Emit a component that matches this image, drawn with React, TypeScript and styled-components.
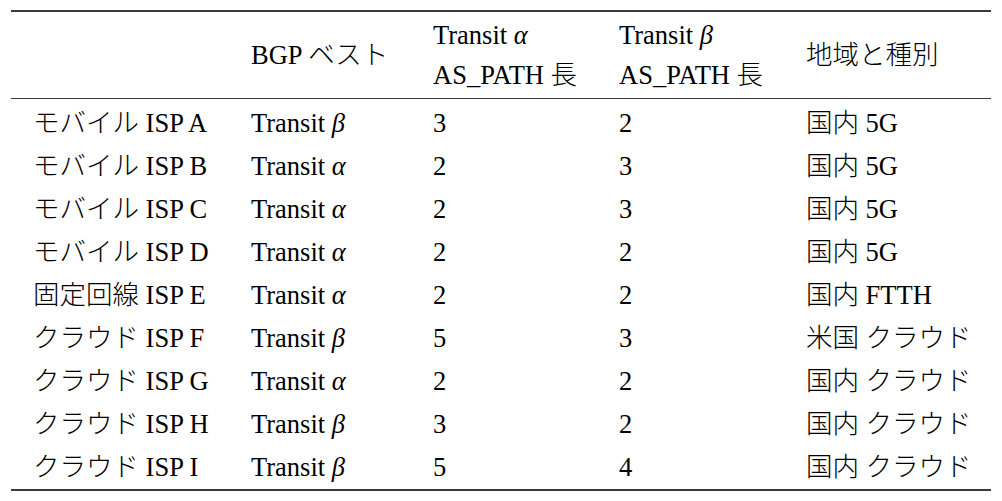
import React from "react";
import styled, { createGlobalStyle } from "styled-components";

interface Row {
  name: string;
  best: "α" | "β";
  alpha: number;
  beta: number;
  region: string;
}

const rows: Row[] = [
  { name: "モバイル ISP A", best: "β", alpha: 3, beta: 2, region: "国内 5G" },
  { name: "モバイル ISP B", best: "α", alpha: 2, beta: 3, region: "国内 5G" },
  { name: "モバイル ISP C", best: "α", alpha: 2, beta: 3, region: "国内 5G" },
  { name: "モバイル ISP D", best: "α", alpha: 2, beta: 2, region: "国内 5G" },
  { name: "固定回線 ISP E", best: "α", alpha: 2, beta: 2, region: "国内 FTTH" },
  { name: "クラウド ISP F", best: "β", alpha: 5, beta: 3, region: "米国 クラウド" },
  { name: "クラウド ISP G", best: "α", alpha: 2, beta: 2, region: "国内 クラウド" },
  { name: "クラウド ISP H", best: "β", alpha: 3, beta: 2, region: "国内 クラウド" },
  { name: "クラウド ISP I", best: "β", alpha: 5, beta: 4, region: "国内 クラウド" },
];

const GlobalStyle = createGlobalStyle`
  html, body {
    margin: 0;
    padding: 0;
    background: #ffffff;
  }
  body {
    font-family: "Liberation Serif", "Noto Sans CJK JP", serif;
    color: #000;
  }
`;

const Page = styled.div`
  width: 1002px;
  height: 501px;
  padding: 10px 0 0 11px;
  box-sizing: border-box;
`;

const Table = styled.div`
  width: 980px;
  border-top: 2px solid #3a3a3a;
  border-bottom: 2px solid #3a3a3a;
  font-size: 26.5px;
  font-weight: 300;
`;

const Grid = styled.div`
  display: grid;
  grid-template-columns: 218px 182px 186px 187px 207px;
`;

const HeaderRow = styled(Grid)`
  height: 86px;
  border-bottom: 1px solid #3a3a3a;
`;

const Body = styled.div`
  padding-top: 3px;
`;

const HeadCell = styled.div`
  display: flex;
  flex-direction: column;
  justify-content: center;
  padding: 0 22px;
  line-height: 40px;
  white-space: nowrap;
`;

const Cell = styled.div`
  padding: 0 22px;
  height: 43px;
  line-height: 43px;
  white-space: nowrap;
`;

const Greek = styled.i`
  font-family: "Liberation Serif", serif;
  font-style: italic;
`;

const Transit: React.FC<{ g: "α" | "β" }> = ({ g }) => (
  <>
    Transit&nbsp;<Greek>{g}</Greek>
  </>
);

export default function App() {
  return (
    <>
      <GlobalStyle />
      <Page>
        <Table>
          <HeaderRow>
            <HeadCell />
            <HeadCell>BGP ベスト</HeadCell>
            <HeadCell>
              <div>
                <Transit g="α" />
              </div>
              <div>AS_PATH 長</div>
            </HeadCell>
            <HeadCell>
              <div>
                <Transit g="β" />
              </div>
              <div>AS_PATH 長</div>
            </HeadCell>
            <HeadCell>地域と種別</HeadCell>
          </HeaderRow>
          <Body>
            {rows.map((r) => (
              <Grid key={r.name}>
                <Cell>{r.name}</Cell>
                <Cell>
                  <Transit g={r.best} />
                </Cell>
                <Cell>{r.alpha}</Cell>
                <Cell>{r.beta}</Cell>
                <Cell>{r.region}</Cell>
              </Grid>
            ))}
          </Body>
        </Table>
      </Page>
    </>
  );
}
